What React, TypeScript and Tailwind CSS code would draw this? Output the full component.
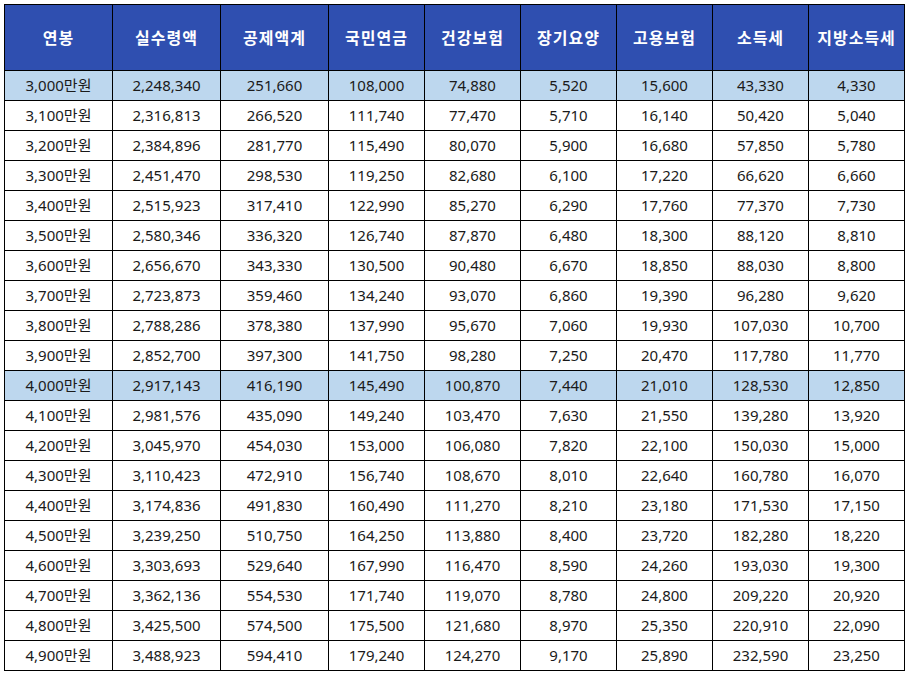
import React from "react";

const headers = ["연봉", "실수령액", "공제액계", "국민연금", "건강보험", "장기요양", "고용보험", "소득세", "지방소득세"];
const widths = ["w-[108px]", "w-[108px]", "w-[108px]", "w-[96px]", "w-[96px]", "w-[96px]", "w-[96px]", "w-[96px]", "w-[96px]"];

const rows: string[][] = [
  ["3,000만원", "2,248,340", "251,660", "108,000", "74,880", "5,520", "15,600", "43,330", "4,330"],
  ["3,100만원", "2,316,813", "266,520", "111,740", "77,470", "5,710", "16,140", "50,420", "5,040"],
  ["3,200만원", "2,384,896", "281,770", "115,490", "80,070", "5,900", "16,680", "57,850", "5,780"],
  ["3,300만원", "2,451,470", "298,530", "119,250", "82,680", "6,100", "17,220", "66,620", "6,660"],
  ["3,400만원", "2,515,923", "317,410", "122,990", "85,270", "6,290", "17,760", "77,370", "7,730"],
  ["3,500만원", "2,580,346", "336,320", "126,740", "87,870", "6,480", "18,300", "88,120", "8,810"],
  ["3,600만원", "2,656,670", "343,330", "130,500", "90,480", "6,670", "18,850", "88,030", "8,800"],
  ["3,700만원", "2,723,873", "359,460", "134,240", "93,070", "6,860", "19,390", "96,280", "9,620"],
  ["3,800만원", "2,788,286", "378,380", "137,990", "95,670", "7,060", "19,930", "107,030", "10,700"],
  ["3,900만원", "2,852,700", "397,300", "141,750", "98,280", "7,250", "20,470", "117,780", "11,770"],
  ["4,000만원", "2,917,143", "416,190", "145,490", "100,870", "7,440", "21,010", "128,530", "12,850"],
  ["4,100만원", "2,981,576", "435,090", "149,240", "103,470", "7,630", "21,550", "139,280", "13,920"],
  ["4,200만원", "3,045,970", "454,030", "153,000", "106,080", "7,820", "22,100", "150,030", "15,000"],
  ["4,300만원", "3,110,423", "472,910", "156,740", "108,670", "8,010", "22,640", "160,780", "16,070"],
  ["4,400만원", "3,174,836", "491,830", "160,490", "111,270", "8,210", "23,180", "171,530", "17,150"],
  ["4,500만원", "3,239,250", "510,750", "164,250", "113,880", "8,400", "23,720", "182,280", "18,220"],
  ["4,600만원", "3,303,693", "529,640", "167,990", "116,470", "8,590", "24,260", "193,030", "19,300"],
  ["4,700만원", "3,362,136", "554,530", "171,740", "119,070", "8,780", "24,800", "209,220", "20,920"],
  ["4,800만원", "3,425,500", "574,500", "175,500", "121,680", "8,970", "25,350", "220,910", "22,090"],
  ["4,900만원", "3,488,923", "594,410", "179,240", "124,270", "9,170", "25,890", "232,590", "23,250"],
];

export default function App() {
  return (
    <div className="w-[909px] h-[676px] bg-white pl-[4px] pt-[4px] font-['Noto_Sans','Noto_Sans_CJK_KR',sans-serif]">
      <table className="border-collapse table-fixed w-[901px]">
        <thead>
          <tr className="h-[66px] bg-[#2f4fb0]">
            {headers.map((h, i) => (
              <th key={h} className={`${widths[i]} border border-black text-white text-[16px] font-bold text-center p-0 tracking-[1px]`}>
                {h}
              </th>
            ))}
          </tr>
        </thead>
        <tbody>
          {rows.map((r) => {
            const hi = r[0] === "3,000만원" || r[0] === "4,000만원";
            return (
              <tr key={r[0]} className={`h-[30px] ${hi ? "bg-[#bdd7ee]" : "bg-white"}`}>
                {r.map((c, j) => (
                  <td key={j} className="border border-black text-center text-[15px] text-[#1a1a1a] p-0 leading-none">
                    {c}
                  </td>
                ))}
              </tr>
            );
          })}
        </tbody>
      </table>
    </div>
  );
}
